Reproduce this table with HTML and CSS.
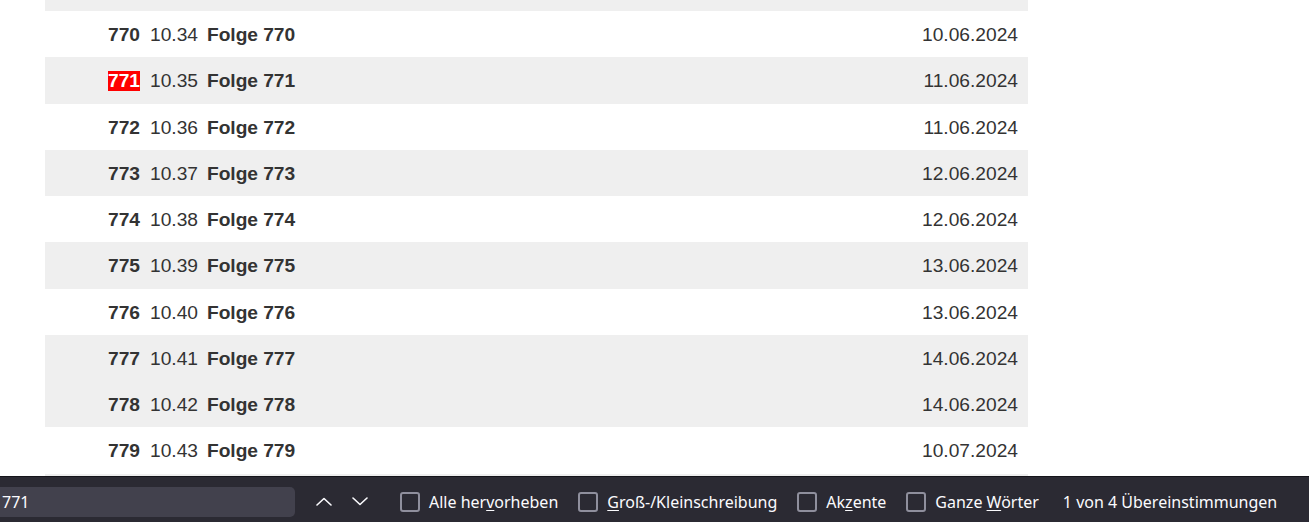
FILE: index.html
```html
<!DOCTYPE html>
<html lang="de">
<head>
<meta charset="utf-8">
<title>Folgen</title>
<link rel="stylesheet" href="styles.css">
</head>
<body>
<div class="page">
  <div class="viewport">
    <div class="list">
      <div class="row alt"></div>
      <div class="row"><span class="num">770</span><span class="time">10.34</span><span class="title">Folge 770</span><span class="date">10.06.2024</span></div>
      <div class="row alt"><span class="num"><span class="hit">771</span></span><span class="time">10.35</span><span class="title">Folge 771</span><span class="date">11.06.2024</span></div>
      <div class="row"><span class="num">772</span><span class="time">10.36</span><span class="title">Folge 772</span><span class="date">11.06.2024</span></div>
      <div class="row alt"><span class="num">773</span><span class="time">10.37</span><span class="title">Folge 773</span><span class="date">12.06.2024</span></div>
      <div class="row"><span class="num">774</span><span class="time">10.38</span><span class="title">Folge 774</span><span class="date">12.06.2024</span></div>
      <div class="row alt"><span class="num">775</span><span class="time">10.39</span><span class="title">Folge 775</span><span class="date">13.06.2024</span></div>
      <div class="row"><span class="num">776</span><span class="time">10.40</span><span class="title">Folge 776</span><span class="date">13.06.2024</span></div>
      <div class="row alt"><span class="num">777</span><span class="time">10.41</span><span class="title">Folge 777</span><span class="date">14.06.2024</span></div>
      <div class="row alt"><span class="num">778</span><span class="time">10.42</span><span class="title">Folge 778</span><span class="date">14.06.2024</span></div>
      <div class="row"><span class="num">779</span><span class="time">10.43</span><span class="title">Folge 779</span><span class="date">10.07.2024</span></div>
      <div class="row alt"></div>
    </div>
  </div>
  <div class="findbar">
    <div class="find-input">771</div>
    <button class="nav-btn" type="button" aria-label="Vorheriges">
      <svg width="16" height="9" viewBox="0 0 16 9"><path d="M1 8 L8 1.5 L15 8" fill="none" stroke="#fbfbfe" stroke-width="1.6" stroke-linecap="round" stroke-linejoin="round"/></svg>
    </button>
    <button class="nav-btn" type="button" aria-label="Nächstes">
      <svg width="16" height="9" viewBox="0 0 16 9"><path d="M1 1 L8 7.5 L15 1" fill="none" stroke="#fbfbfe" stroke-width="1.6" stroke-linecap="round" stroke-linejoin="round"/></svg>
    </button>
    <label class="opt first"><span class="box"></span><span class="lbl">Alle her<u>v</u>orheben</span></label>
    <label class="opt"><span class="box"></span><span class="lbl"><u>G</u>roß-/Kleinschreibung</span></label>
    <label class="opt"><span class="box"></span><span class="lbl">Ak<u>z</u>ente</span></label>
    <label class="opt"><span class="box"></span><span class="lbl">Ganze <u>W</u>örter</span></label>
    <span class="status">1 von 4 Übereinstimmungen</span>
  </div>
</div>
</body>
</html>
```

FILE: styles.css
```css
html, body {
  margin: 0;
  padding: 0;
  background: #ffffff;
}

.page {
  display: flex;
  flex-direction: column;
  height: 522px;
  overflow: hidden;
}

.viewport {
  height: 476px;
  flex: none;
  overflow: hidden;
}

.list {
  margin-left: 45px;
  width: 983px;
  margin-top: -35.25px;
  font-family: "Liberation Sans", Arial, sans-serif;
  font-size: 19.2px;
  color: #333333;
}

.row {
  display: flex;
  align-items: center;
  height: 46.25px;
  padding: 2px 10px 0 63px;
  box-sizing: border-box;
  background: #ffffff;
}

.row.alt {
  background: #efefef;
}

.num {
  font-weight: bold;
  margin-right: 10px;
  width: 32px;
}

.hit {
  display: inline-block;
  background: #ff0000;
  color: #ffffff;
  line-height: 20px;
  width: 32px;
}

.time {
  margin-right: 9px;
}

.title {
  font-weight: bold;
  letter-spacing: -0.05px;
}

.date {
  margin-left: auto;
}

.findbar {
  flex: none;
  height: 46px;
  box-sizing: border-box;
  border-top: 1px solid #15141a;
  background: #2b2a33;
  padding-top: 4px;
  display: flex;
  align-items: center;
  font-family: "Noto Sans", "Open Sans", sans-serif;
  font-size: 16px;
  color: #fbfbfe;
}

.find-input {
  width: 293px;
  height: 30px;
  line-height: 30px;
  padding-left: 2px;
  background: #42414d;
  border-radius: 0 5px 5px 0;
  color: #fbfbfe;
  flex: none;
}

.nav-btn {
  width: 32px;
  height: 32px;
  margin-left: 13px;
  padding: 0;
  border: none;
  background: transparent;
  display: flex;
  align-items: center;
  justify-content: center;
  flex: none;
}

.nav-btn + .nav-btn {
  margin-left: 4px;
}

.opt {
  display: flex;
  align-items: center;
  margin-left: 20px;
  flex: none;
}

.opt.first {
  margin-left: 24px;
}

.box {
  width: 20px;
  height: 20px;
  box-sizing: border-box;
  border: 2px solid #8f8f9d;
  border-radius: 3px;
  margin-right: 9px;
}

.lbl {
  line-height: 22px;
  padding-top: 1px;
}

.lbl u {
  text-decoration-thickness: 1px;
  text-underline-offset: 2px;
}

.status {
  margin-left: 24px;
  padding-top: 1px;
  flex: none;
}
```
